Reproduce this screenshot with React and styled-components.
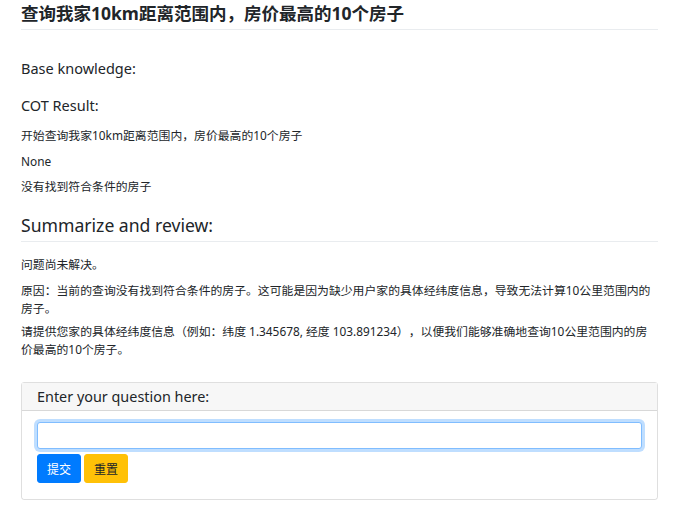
import styled, { createGlobalStyle } from 'styled-components'

const GlobalStyle = createGlobalStyle`
  body {
    margin: 0;
    background: #fff;
    color: #212529;
    font-family: 'Segoe UI', 'Noto Sans', 'Noto Sans CJK SC', sans-serif;
    text-spacing-trim: space-all;
  }
`

export default function App() {
  return (
    <>
      <GlobalStyle />
      <Page>
        <Title>查询我家10km距离范围内，房价最高的10个房子</Title>
        <SectionHeading>Base knowledge:</SectionHeading>
        <SectionHeading $tight>COT Result:</SectionHeading>
        <Paragraphs $gap={8} $top={12}>
          <Text>开始查询我家10km距离范围内，房价最高的10个房子</Text>
          <Text>None</Text>
          <Text>没有找到符合条件的房子</Text>
        </Paragraphs>
        <Summary>Summarize and review:</Summary>
        <Paragraphs $gap={6} $top={14}>
          <Text $lead>问题尚未解决。</Text>
          <Text>
            原因：当前的查询没有找到符合条件的房子。这可能是因为缺少用户家的具体经纬度信息，导致无法计算10公里范围内的房子。
          </Text>
          <Text>
            请提供您家的具体经纬度信息（例如：纬度 1.345678, 经度 103.891234），以便我们能够准确地查询10公里范围内的房价最高的10个房子。
          </Text>
        </Paragraphs>
        <Card>
          <CardHeader>Enter your question here:</CardHeader>
          <CardBody>
            <Input type="text" />
            <Buttons>
              <Button $variant="primary">提交</Button>
              <Button $variant="warning">重置</Button>
            </Buttons>
          </CardBody>
        </Card>
      </Page>
    </>
  )
}

const Page = styled.div`
  display: flex;
  flex-direction: column;
  padding: 0 21px 18px;
`

const Title = styled.h1`
  margin: 2px 0 0;
  padding-bottom: 5px;
  border-bottom: 1px solid #e9ecef;
  font-size: 17.5px;
  line-height: 22px;
  font-weight: 700;
`

const SectionHeading = styled.h3`
  margin: ${(p) => (p.$tight ? '17px' : '28px')} 0 0;
  font-size: 14.5px;
  line-height: 20px;
  font-weight: 400;
`

const Paragraphs = styled.div`
  display: flex;
  flex-direction: column;
  gap: ${(p) => p.$gap}px;
  margin-top: ${(p) => p.$top}px;
`

const Text = styled.p`
  margin: 0 0 ${(p) => (p.$lead ? '3px' : '0')};
  font-size: 11.85px;
  line-height: 17.5px;
`

const Summary = styled.h2`
  margin: 18px 0 0;
  padding-bottom: 5px;
  border-bottom: 1px solid #e9ecef;
  font-size: 17.6px;
  line-height: 22px;
  font-weight: 400;
`

const Card = styled.div`
  margin-top: 24px;
  border: 1px solid rgba(0, 0, 0, 0.125);
  border-radius: 3px;
  display: flex;
  flex-direction: column;
`

const CardHeader = styled.div`
  height: 27px;
  padding: 0 15px;
  background: #f7f7f7;
  border-bottom: 1px solid rgba(0, 0, 0, 0.125);
  font-size: 14.4px;
  line-height: 27px;
`

const CardBody = styled.div`
  padding: 11px 15px 16px;
  display: flex;
  flex-direction: column;
  gap: 5px;
`

const Input = styled.input`
  box-sizing: border-box;
  height: 27px;
  width: 100%;
  border: 1px solid #80bdff;
  border-radius: 3px;
  box-shadow: 0 0 0 3px rgba(0, 123, 255, 0.25);
  outline: none;
  font-family: inherit;
  font-size: 12px;
`

const Buttons = styled.div`
  display: flex;
  gap: 3px;
`

const Button = styled.button`
  width: 44px;
  height: 29px;
  border: 1px solid ${(p) => (p.$variant === 'primary' ? '#007bff' : '#ffc107')};
  background: ${(p) => (p.$variant === 'primary' ? '#007bff' : '#ffc107')};
  color: ${(p) => (p.$variant === 'primary' ? '#fff' : '#212529')};
  border-radius: 3px;
  font-family: inherit;
  font-size: 12px;
  padding: 0;
`
